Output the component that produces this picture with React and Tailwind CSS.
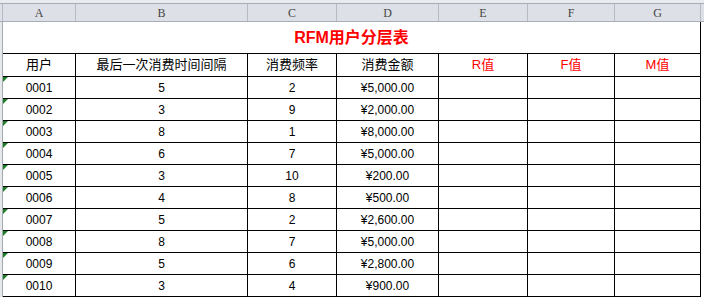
import React from 'react'

const cols = ['A', 'B', 'C', 'D', 'E', 'F', 'G']
const widths = ['w-[73px]', 'w-[172px]', 'w-[89px]', 'w-[102px]', 'w-[89px]', 'w-[87px]', 'w-[86px]']

const rows = [
  ['0001', '5', '2', '¥5,000.00'],
  ['0002', '3', '9', '¥2,000.00'],
  ['0003', '8', '1', '¥8,000.00'],
  ['0004', '6', '7', '¥5,000.00'],
  ['0005', '3', '10', '¥200.00'],
  ['0006', '4', '8', '¥500.00'],
  ['0007', '5', '2', '¥2,600.00'],
  ['0008', '8', '7', '¥5,000.00'],
  ['0009', '5', '6', '¥2,800.00'],
  ['0010', '3', '4', '¥900.00'],
]

const headers = ['用户', '最后一次消费时间间隔', '消费频率', '消费金额', 'R值', 'F值', 'M值']

const App = () => {
  return (
    <div className="w-[704px] h-[300px] overflow-hidden bg-white font-['Liberation_Sans','Noto_Sans_CJK_SC',sans-serif]">
      <div className="h-[3px] bg-[#e9ebee]" />
      {/* column letters */}
      <div className="flex h-[19px] border-y border-[#a7aeb8] bg-[#dde1e7]">
        <div className="w-[3px] border-r border-[#b4bbc4]" />
        {cols.map((c, i) => (
          <div
            key={c}
            className={`${widths[i]} shrink-0 border-r border-[#b4bbc4] flex items-center justify-center text-[12px] text-[#444] font-['Liberation_Serif',serif]`}
          >
            {c}
          </div>
        ))}
      </div>

      <div className="flex">
        <div className="w-[3px] shrink-0 bg-[#e6e8eb] border-r border-[#a3a9b1]" />
        <div>
          {/* merged title */}
          <div className="w-[698px] h-[31px] border-r border-black flex items-center justify-center text-[16px] font-bold text-[#ff0000]">
            RFM用户分层表
          </div>

          {/* header row */}
          <div className="flex h-[24px] border-y border-black">
            {headers.map((h, i) => (
              <div
                key={h}
                className={`${widths[i]} shrink-0 border-r border-black flex items-center justify-center text-[13px] ${i > 3 ? 'text-[#ff0000]' : 'text-black'}`}
              >
                {h}
              </div>
            ))}
          </div>

          {rows.map((r) => (
            <div key={r[0]} className="flex h-[22px] border-b border-black">
              {widths.map((w, i) => (
                <div
                  key={i}
                  className={`${w} shrink-0 relative border-r border-black flex items-center justify-center text-[12px] text-black`}
                >
                  {i === 0 && (
                    <span className="absolute left-0 top-0 w-0 h-0 border-t-[5px] border-t-[#1f7d28] border-r-[5px] border-r-transparent" />
                  )}
                  {r[i] || ''}
                </div>
              ))}
            </div>
          ))}
        </div>
      </div>
    </div>
  )
}

export default App
